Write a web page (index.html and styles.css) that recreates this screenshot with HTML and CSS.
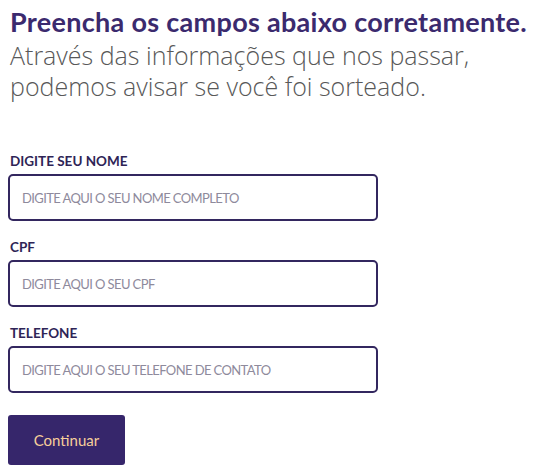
FILE: index.html
```html
<!DOCTYPE html>
<html lang="pt-BR">
<head>
<meta charset="utf-8">
<link rel="stylesheet" href="styles.css">
</head>
<body>
<div class="page">
  <h1 class="title">Preencha os campos abaixo corretamente.</h1>
  <p class="lead">Através das informações que nos passar,<br>podemos avisar se você foi sorteado.</p>
  <form class="form">
    <label class="field">
      <span class="label">DIGITE SEU NOME</span>
      <input class="input" type="text" placeholder="DIGITE AQUI O SEU NOME COMPLETO">
    </label>
    <label class="field">
      <span class="label">CPF</span>
      <input class="input" type="text" placeholder="DIGITE AQUI O SEU CPF">
    </label>
    <label class="field">
      <span class="label">TELEFONE</span>
      <input class="input" type="text" placeholder="DIGITE AQUI O SEU TELEFONE DE CONTATO">
    </label>
    <button class="btn" type="button">Continuar</button>
  </form>
</div>
</body>
</html>
```
FILE: styles.css
```css
* { box-sizing: border-box; }
html, body { margin: 0; padding: 0; background: #fff; }
.page {
  padding: 4px 8px 0 10px;
  font-family: "Open Sans", sans-serif;
}
.title {
  margin: 0;
  font-family: "Lato", sans-serif;
  font-size: 27px;
  font-weight: 700;
  line-height: 36px;
  letter-spacing: 0.3px;
  color: #3b2a6e;
  white-space: nowrap;
}
.lead {
  margin: 0;
  font-size: 25px;
  font-weight: 300;
  line-height: 31px;
  color: #585858;
}
.form {
  margin-top: 50px;
  margin-left: -2px;
  display: flex;
  flex-direction: column;
  align-items: flex-start;
}
.field {
  display: flex;
  flex-direction: column;
  margin-bottom: 17px;
}
.label {
  font-family: "Lato", sans-serif;
  font-weight: 700;
  font-size: 13.5px;
  color: #2e2456;
  padding-left: 2px;
  line-height: 18px;
  margin-bottom: 4px;
}
.input {
  width: 370px;
  height: 47px;
  border: 2px solid #33275f;
  border-radius: 5px;
  padding: 0 12px;
  font-family: "Lato", sans-serif;
  font-size: 13px;
  letter-spacing: -0.6px;
  color: #333;
  background: #fff;
  outline: none;
}
.input::placeholder { color: #8e8a9c; }
.btn {
  margin-top: 5px;
  width: 117px;
  height: 50px;
  border: none;
  border-radius: 3px;
  background: #36266b;
  color: #f6cf9a;
  font-family: "Lato", sans-serif;
  font-size: 15px;
  cursor: pointer;
}
```
